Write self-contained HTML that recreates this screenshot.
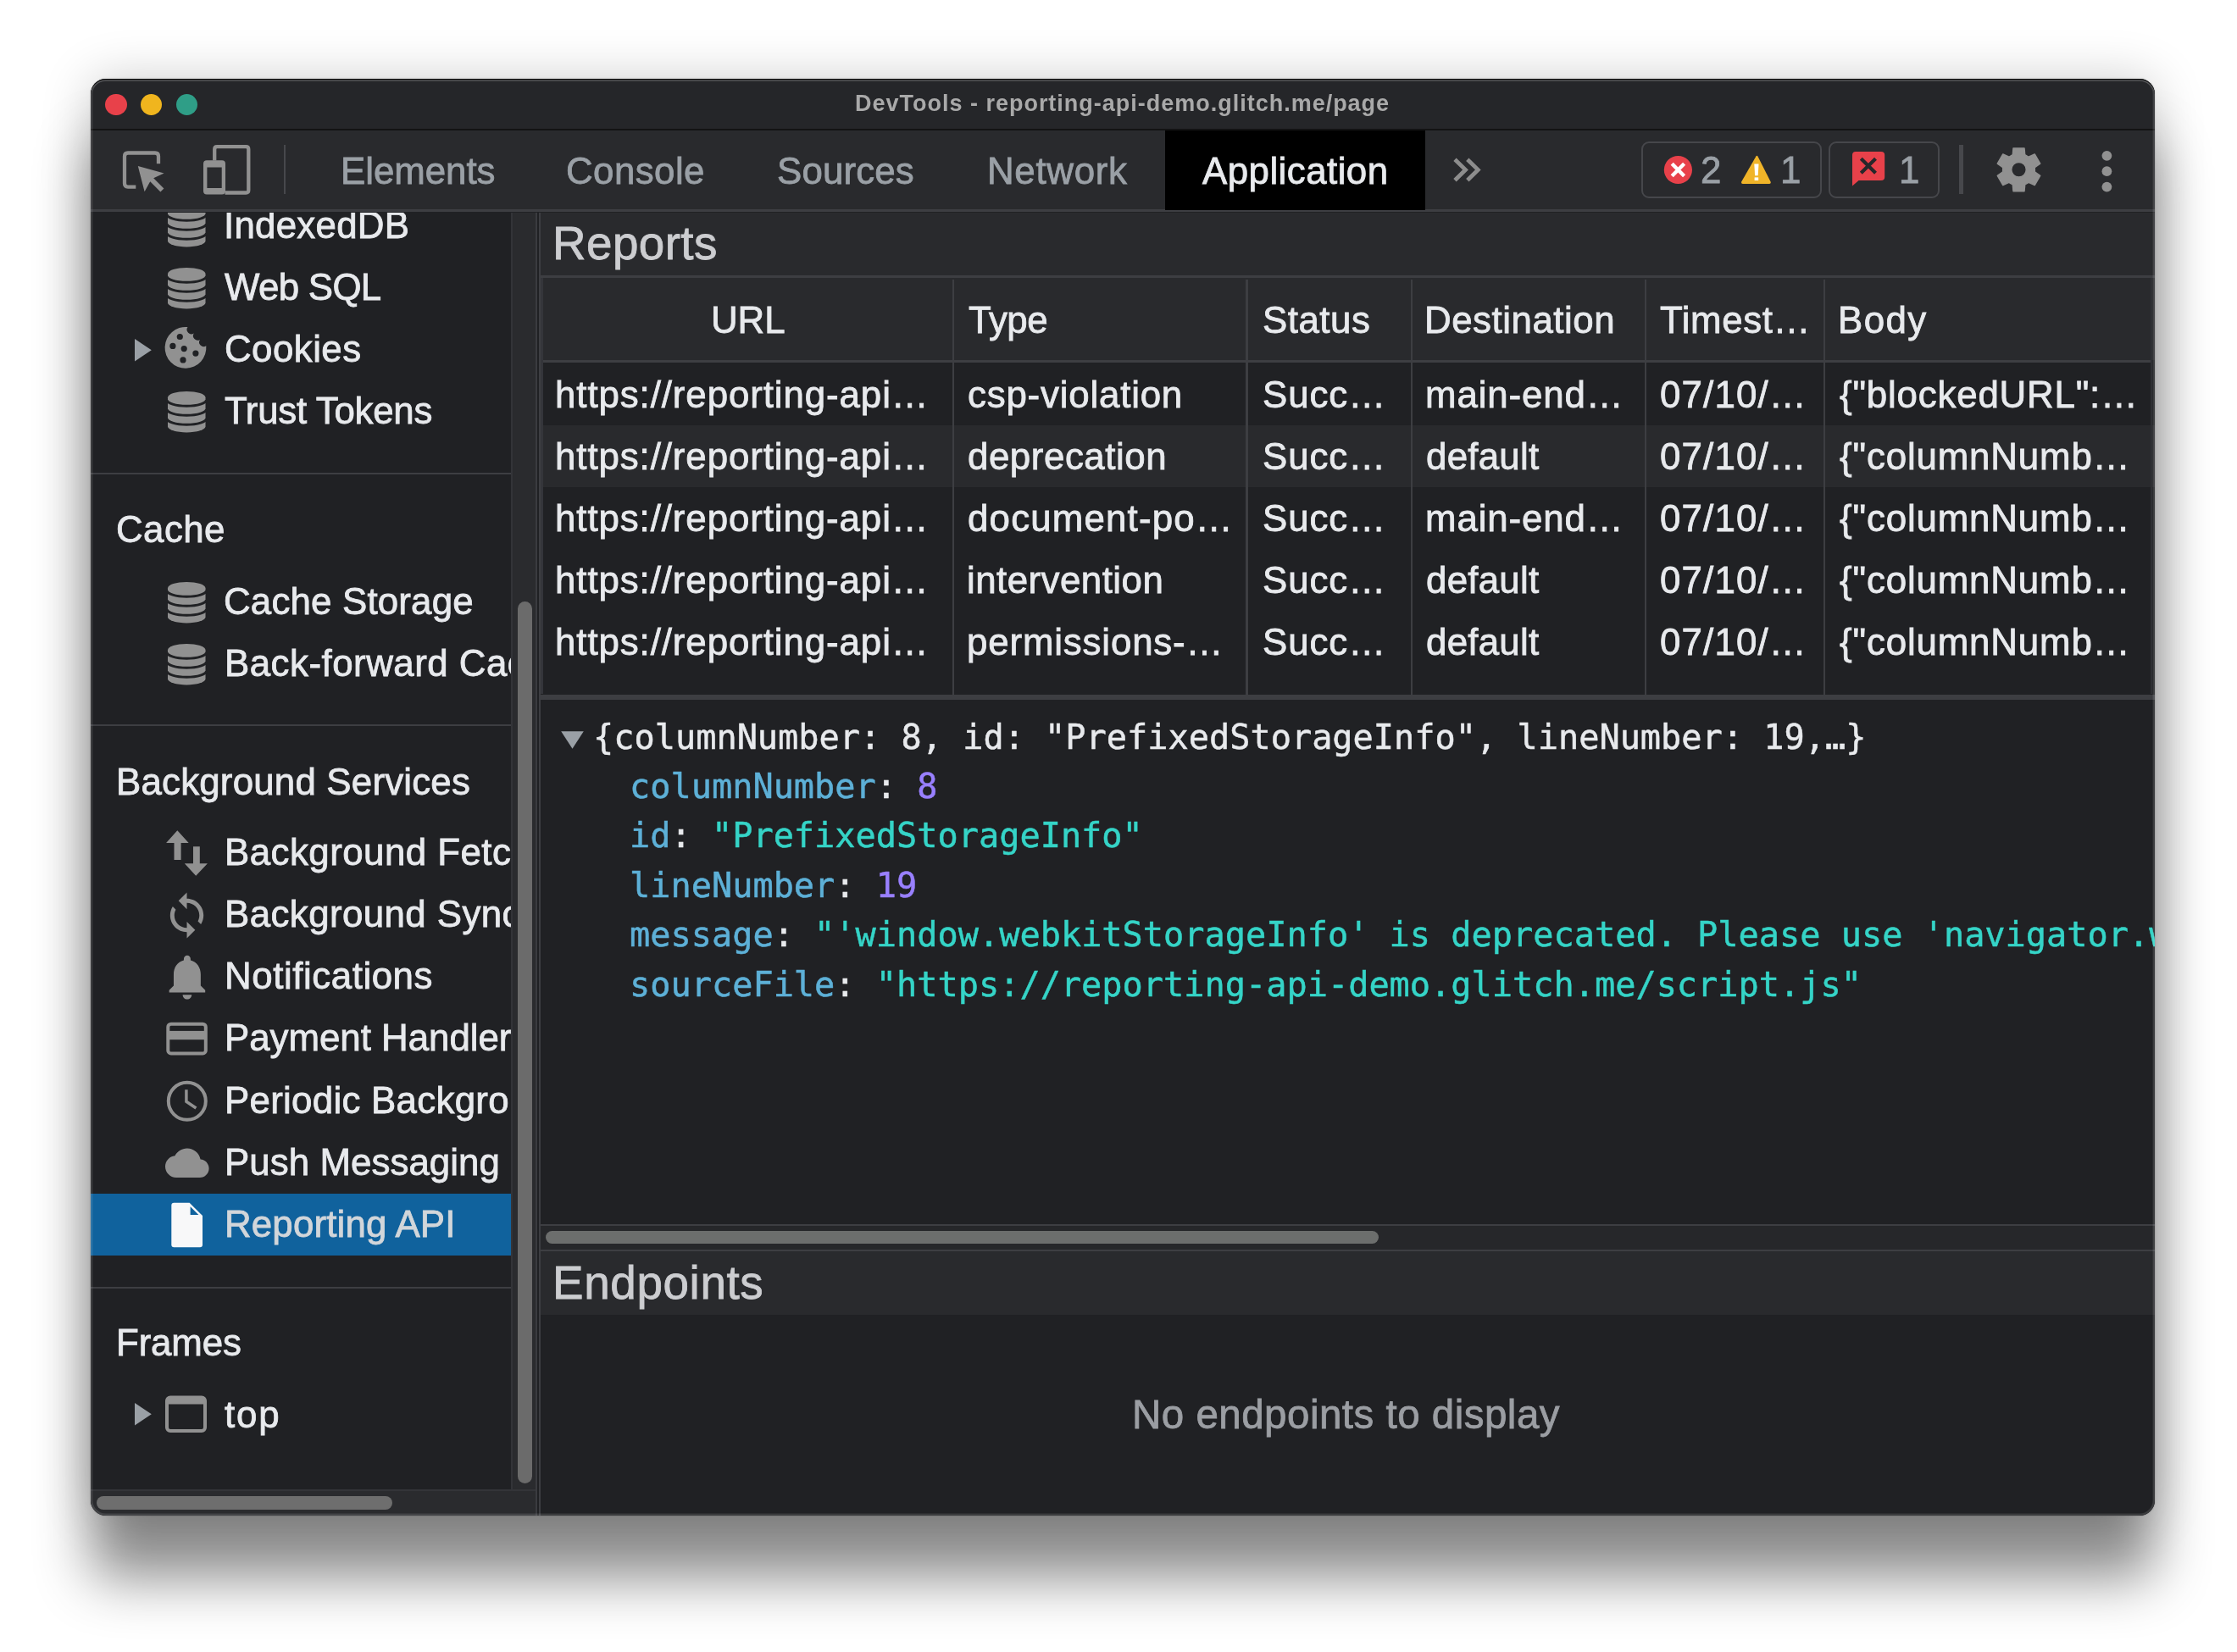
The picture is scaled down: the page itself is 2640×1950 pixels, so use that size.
<!DOCTYPE html>
<html lang="en"><head><meta charset="utf-8"><title>DevTools - reporting-api-demo.glitch.me/page</title>
<style>
html,body{margin:0;padding:0;background:#fff;}
body{width:2640px;height:1950px;position:relative;overflow:hidden;font-family:"Liberation Sans", sans-serif;}
#win{position:absolute;left:107px;top:93px;width:2436px;height:1696px;background:#202124;border-radius:18px;overflow:hidden;}
#shadow{position:absolute;left:107px;top:93px;width:2436px;height:1696px;border-radius:18px;box-shadow:0 75px 65px rgba(0,0,0,.44),0 0 60px rgba(0,0,0,.2),0 0 2px rgba(0,0,0,.25);}
#rim{position:absolute;left:0;top:0;right:0;bottom:0;border-radius:18px;box-shadow:inset 0 1.2px 0 0 rgba(0,0,0,.85),inset 0 0 0 2.4px rgba(255,255,255,.12),inset 0 3px 0 0 rgba(255,255,255,.12);pointer-events:none;}
.b{position:absolute;}
.i{position:absolute;overflow:visible;}
.t{position:absolute;white-space:nowrap;line-height:1em;-webkit-text-stroke:.8px;will-change:transform;}
.j{position:absolute;white-space:pre;font-family:"DejaVu Sans Mono", "Liberation Mono", monospace;font-size:40.26px;line-height:1em;-webkit-text-stroke:.5px;will-change:transform;}
</style></head>
<body>
<div id="shadow"></div>
<div id="win">
<div class="b" style="left:0px;top:0px;width:2436px;height:61.4px;background:#252629;border-bottom:2.2px solid #131314;box-sizing:border-box;"><div class="b" style="left:17.3px;top:17.9px;width:25.4px;height:25.4px;background:#e8414a;border-radius:50%;"></div><div class="b" style="left:58.9px;top:17.9px;width:25.4px;height:25.4px;background:#f0b51e;border-radius:50%;"></div><div class="b" style="left:100.7px;top:17.9px;width:25.4px;height:25.4px;background:#2f9e87;border-radius:50%;"></div><span class="t" style="left:901.61px;top:16.04px;font-size:27px;color:#a9a9a9;letter-spacing:0.99px;font-weight:bold;-webkit-text-stroke:0px;">DevTools - reporting-api-demo.glitch.me/page</span></div>
<div class="b" style="left:0px;top:61.4px;width:2436px;height:96.1px;background:#292a2d;border-bottom:3px solid #3d3e42;box-sizing:border-box;"><div class="b" style="left:1268px;top:0px;width:307px;height:93.4px;background:#000;"></div>
<svg class="i" style="left:33px;top:15.6px;" width="60" height="62" viewBox="140 170 60 62"><path d="M187 193.2V184.5Q187 180.5 183 180.5H151Q147 180.5 147 184.5V216.6Q147 220.6 151 220.6H160.3" fill="none" stroke="#919191" stroke-width="4.3"/><path d="M162.8 196 193.6 204.6 181.2 210.3 193.4 222.4 189.4 226.4 177.2 214.2 170.6 226.2Z" fill="#919191"/></svg>
<svg class="i" style="left:129px;top:13.6px;" width="64" height="66" viewBox="236 168 64 66"><path d="M253.2 189.5V176.2Q253.2 173.2 256.2 173.2H290.3Q293.3 173.2 293.3 176.2V224.5Q293.3 227.5 290.3 227.5H265.5" fill="none" stroke="#919191" stroke-width="4.3"/><path fill-rule="evenodd" d="M244 189.3H262Q266 189.3 266 193.3V225.6Q266 229.6 262 229.6H244Q240 229.6 240 225.6V193.3Q240 189.3 244 189.3ZM244.4 197.4V222H261.7V197.4Z" fill="#919191"/></svg>
<div class="b" style="left:227.8px;top:16.6px;width:2.3px;height:58px;background:#47484c;"></div>
<svg class="i" style="left:1601px;top:25.6px;" width="48" height="42" viewBox="1708 180 48 42"><path d="M1717 188.2 1729.5 200.4 1717 212.8M1731.8 188.2 1744.3 200.4 1731.8 212.8" fill="none" stroke="#8d8d8d" stroke-width="4.8"/></svg>
<div class="b" style="left:1829.6px;top:12.6px;width:213px;height:67px;border:2.6px solid #46474b;border-radius:9px;box-sizing:border-box;"></div>
<div class="b" style="left:2051.2px;top:12.6px;width:131.2px;height:67px;border:2.6px solid #46474b;border-radius:9px;box-sizing:border-box;"></div>
<svg class="i" style="left:1853px;top:25.6px;" width="40" height="42" viewBox="1960 180 40 42"><circle cx="1980.4" cy="200.5" r="16.6" fill="#e8414a"/><path d="M1973.2 193.3 1987.6 207.7M1987.6 193.3 1973.2 207.7" stroke="#fff" stroke-width="4.4" fill="none"/></svg>
<svg class="i" style="left:1945px;top:25.6px;" width="42" height="42" viewBox="2052 180 42 42"><path d="M2072.4 184.5Q2073.4 182.9 2074.4 184.5L2089.6 214.6Q2090.3 216.9 2088 217H2056.8Q2054.5 216.9 2055.2 214.6Z" fill="#f0b429"/><path d="M2070.3 193.5H2075.5L2074.7 207.2H2071.1Z" fill="#fff"/><rect x="2070.6" y="209.4" width="4.6" height="3.6" fill="#fff"/></svg>
<svg class="i" style="left:2075px;top:20.6px;" width="48" height="49" viewBox="2182 175 48 49"><path d="M2190 179H2220Q2224.2 179 2224.2 183V209Q2224.2 213 2220 213H2193.5L2186 219.6V183Q2186 179 2190 179Z" fill="#e8414a"/><path d="M2196.3 187.2 2213.5 204.2M2213.5 187.2 2196.3 204.2" stroke="#26272a" stroke-width="4.2" fill="none"/></svg>
<div class="b" style="left:2205.2px;top:16.3px;width:4.6px;height:58.7px;background:#47484c;"></div>
<svg class="i" style="left:2245px;top:15.6px;" width="62" height="62" viewBox="2352 170 62 62"><path fill-rule="evenodd" d="M2375.3 182.7 2376.0 174.9 2389.0 174.9 2389.7 182.7 2394.1 185.3 2401.2 182.0 2407.7 193.2 2401.3 197.7 2401.3 202.9 2407.7 207.4 2401.2 218.6 2394.1 215.3 2389.7 217.9 2389.0 225.7 2376.0 225.7 2375.3 217.9 2370.9 215.3 2363.8 218.6 2357.3 207.4 2363.7 202.9 2363.7 197.7 2357.3 193.2 2363.8 182.0 2370.9 185.3ZM2373.7 200.3A8.8 8.8 0 1 0 2391.3 200.3A8.8 8.8 0 1 0 2373.7 200.3Z" fill="#919191" stroke="#919191" stroke-width="1.5" stroke-linejoin="round"/></svg>
<svg class="i" style="left:2371px;top:19.6px;" width="18" height="56" viewBox="2478 174 18 56"><circle cx="2486.4" cy="183.8" r="5.9" fill="#919191"/><circle cx="2486.4" cy="202.2" r="5.9" fill="#919191"/><circle cx="2486.4" cy="220.6" r="5.9" fill="#919191"/></svg><span class="t" style="left:294.97px;top:25.46px;font-size:43.87px;color:#9aa0a6;letter-spacing:-0.04px;">Elements</span>
<span class="t" style="left:560.74px;top:25.46px;font-size:43.87px;color:#9aa0a6;letter-spacing:0.43px;">Console</span>
<span class="t" style="left:809.53px;top:25.46px;font-size:43.87px;color:#9aa0a6;letter-spacing:0.13px;">Sources</span>
<span class="t" style="left:1058.37px;top:25.46px;font-size:43.87px;color:#9aa0a6;letter-spacing:0.69px;">Network</span>
<span class="t" style="left:1312.4px;top:25.46px;font-size:43.87px;color:#e8eaed;letter-spacing:0.45px;">Application</span>
<span class="t" style="left:1900.34px;top:24.66px;font-size:43.87px;color:#9aa0a6;">2</span>
<span class="t" style="left:1994.36px;top:24.66px;font-size:43.87px;color:#9aa0a6;">1</span>
<span class="t" style="left:2134.06px;top:24.66px;font-size:43.87px;color:#9aa0a6;">1</span></div>
<div class="b" style="left:0px;top:157.5px;width:495.7px;height:1507px;background:#202124;overflow:hidden;"><svg class="i" style="left:89.1px;top:-9.3px;" width="48.5" height="54" viewBox="196.1 241.2 48.5 54"><path d="M198.1 250.39999999999998A22.25 7.2 0 0 1 242.6 250.39999999999998V284.4A22.25 7.2 0 0 1 198.1 284.4Z" fill="#919191"/><path d="M197.1 253.2A23.25 7.2 0 0 0 243.6 253.2" fill="none" stroke="#202124" stroke-width="3"/><path d="M197.1 264.2A23.25 7.2 0 0 0 243.6 264.2" fill="none" stroke="#202124" stroke-width="3"/><path d="M197.1 275.2A23.25 7.2 0 0 0 243.6 275.2" fill="none" stroke="#202124" stroke-width="3"/></svg>
<svg class="i" style="left:89.1px;top:63.7px;" width="48.5" height="54" viewBox="196.1 314.2 48.5 54"><path d="M198.1 323.4A22.25 7.2 0 0 1 242.6 323.4V357.4A22.25 7.2 0 0 1 198.1 357.4Z" fill="#919191"/><path d="M197.1 326.2A23.25 7.2 0 0 0 243.6 326.2" fill="none" stroke="#202124" stroke-width="3"/><path d="M197.1 337.2A23.25 7.2 0 0 0 243.6 337.2" fill="none" stroke="#202124" stroke-width="3"/><path d="M197.1 348.2A23.25 7.2 0 0 0 243.6 348.2" fill="none" stroke="#202124" stroke-width="3"/></svg>
<svg class="i" style="left:89.1px;top:209.9px;" width="48.5" height="54" viewBox="196.1 460.4 48.5 54"><path d="M198.1 469.59999999999997A22.25 7.2 0 0 1 242.6 469.59999999999997V503.59999999999997A22.25 7.2 0 0 1 198.1 503.59999999999997Z" fill="#919191"/><path d="M197.1 472.4A23.25 7.2 0 0 0 243.6 472.4" fill="none" stroke="#202124" stroke-width="3"/><path d="M197.1 483.4A23.25 7.2 0 0 0 243.6 483.4" fill="none" stroke="#202124" stroke-width="3"/><path d="M197.1 494.4A23.25 7.2 0 0 0 243.6 494.4" fill="none" stroke="#202124" stroke-width="3"/></svg>
<svg class="i" style="left:89.1px;top:434.5px;" width="48.5" height="54" viewBox="196.1 685 48.5 54"><path d="M198.1 694.2A22.25 7.2 0 0 1 242.6 694.2V728.1999999999999A22.25 7.2 0 0 1 198.1 728.1999999999999Z" fill="#919191"/><path d="M197.1 697.0A23.25 7.2 0 0 0 243.6 697.0" fill="none" stroke="#202124" stroke-width="3"/><path d="M197.1 708.0A23.25 7.2 0 0 0 243.6 708.0" fill="none" stroke="#202124" stroke-width="3"/><path d="M197.1 719.0A23.25 7.2 0 0 0 243.6 719.0" fill="none" stroke="#202124" stroke-width="3"/></svg>
<svg class="i" style="left:89.1px;top:507.6px;" width="48.5" height="54" viewBox="196.1 758.1 48.5 54"><path d="M198.1 767.3000000000001A22.25 7.2 0 0 1 242.6 767.3000000000001V801.3A22.25 7.2 0 0 1 198.1 801.3Z" fill="#919191"/><path d="M197.1 770.1A23.25 7.2 0 0 0 243.6 770.1" fill="none" stroke="#202124" stroke-width="3"/><path d="M197.1 781.1A23.25 7.2 0 0 0 243.6 781.1" fill="none" stroke="#202124" stroke-width="3"/><path d="M197.1 792.1A23.25 7.2 0 0 0 243.6 792.1" fill="none" stroke="#202124" stroke-width="3"/></svg>
<svg class="i" style="left:50.8px;top:148.1px;" width="21.8" height="28.6" viewBox="157.8 398.6 21.8 28.6"><path d="M158.8 399.6L178.6 412.9L158.8 426.2Z" fill="#9aa0a6"/></svg>
<svg class="i" style="left:50.8px;top:1404.3px;" width="21.8" height="28.6" viewBox="157.8 1654.8 21.8 28.6"><path d="M158.8 1655.8L178.6 1669.1L158.8 1682.4Z" fill="#9aa0a6"/></svg>
<svg class="i" style="left:85px;top:132.5px;" width="54" height="55" viewBox="192 383 54 55"><path d="M221.5 386.1A24.4 24.4 0 1 0 243.3 408.3A5.3 5.3 0 0 1 236 400.9A5.3 5.3 0 0 1 228.8 393.5A5.3 5.3 0 0 1 221.5 386.1Z" fill="#919191"/><circle cx="212.3" cy="397.5" r="3.6" fill="#202124"/><circle cx="203.9" cy="408.4" r="3.6" fill="#202124"/><circle cx="217.2" cy="411.6" r="3.6" fill="#202124"/><circle cx="230.9" cy="417.1" r="3.6" fill="#202124"/><circle cx="216" cy="424.9" r="3.6" fill="#202124"/></svg>
<div class="b" style="left:0px;top:307.1px;width:495.7px;height:2.4px;background:#3d3e42;"></div>
<div class="b" style="left:0px;top:604.3px;width:495.7px;height:2.4px;background:#3d3e42;"></div>
<div class="b" style="left:0px;top:1268.5px;width:495.7px;height:2.4px;background:#3d3e42;"></div>
<svg class="i" style="left:87px;top:727.5px;" width="53" height="58" viewBox="194 978 53 58"><path d="M209.3 980.3 222.7 995H213.6V1015H205.5V995H196.1ZM231.2 1033.8 244.9 1019.2H235.8V999.2H228V1019.2H217.8Z" fill="#919191"/></svg>
<svg class="i" style="left:83.78px;top:800.18px" width="59.04" height="59.04" viewBox="0 0 24 24"><path d="M12 4V1L8 5l4 4V6c3.31 0 6 2.69 6 6 0 1.01-.25 1.97-.7 2.8l1.46 1.46C19.54 15.03 20 13.57 20 12c0-4.42-3.58-8-8-8zm0 14c-3.31 0-6-2.69-6-6 0-1.01.25-1.97.7-2.8L5.24 7.74C4.46 8.97 4 10.43 4 12c0 4.42 3.58 8 8 8v3l4-4-4-4v3z" fill="#919191"/></svg>
<svg class="i" style="left:81.58px;top:870.37px" width="63.84" height="63.84" viewBox="0 0 24 24"><path d="M12 22c1.1 0 2-.9 2-2h-4c0 1.1.89 2 2 2zm6-6v-5c0-3.07-1.64-5.64-4.5-6.32V4c0-.83-.67-1.5-1.5-1.5s-1.5.67-1.5 1.5v.68C7.63 5.36 6 7.92 6 11v5l-2 2v1h16v-1l-2-2z" fill="#919191"/></svg>
<svg class="i" style="left:87px;top:953.5px;" width="53" height="44" viewBox="194 1204 53 44"><rect x="198.3" y="1208.7" width="44.5" height="34.7" rx="3.5" fill="none" stroke="#919191" stroke-width="4"/><rect x="198" y="1216.9" width="45" height="10.3" fill="#919191"/></svg>
<svg class="i" style="left:87px;top:1022.5px;" width="53" height="54" viewBox="194 1273 53 54"><circle cx="220.8" cy="1299.8" r="22" fill="none" stroke="#919191" stroke-width="4"/><path d="M219.9 1286.2V1300.2L231.4 1308" fill="none" stroke="#919191" stroke-width="3.5"/></svg>
<svg class="i" style="left:87.6px;top:1096.35px" width="51.6" height="51.6" viewBox="0 0 24 24"><path d="M19.35 10.04C18.67 6.59 15.64 4 12 4 9.11 4 6.6 5.64 5.35 8.04 2.34 8.36 0 10.91 0 14c0 3.31 2.69 6 6 6h13c2.76 0 5-2.24 5-5 0-2.64-2.05-4.78-4.65-4.96z" fill="#919191"/></svg>
<div class="b" style="left:0px;top:1158px;width:495.7px;height:73px;background:#10629d;"></div>
<svg class="i" style="left:93px;top:1166.5px;" width="42" height="58" viewBox="200 1417 42 58"><path d="M205.3 1419.7H223.6L239 1435.1V1469.3Q239 1472.3 236 1472.3H205.3Q202.3 1472.3 202.3 1469.3V1422.7Q202.3 1419.7 205.3 1419.7Z" fill="#f8f8f9"/><path d="M224.6 1424.2V1434H234.4Z" fill="#10629d"/></svg>
<svg class="i" style="left:86px;top:1394.5px;" width="54" height="49" viewBox="193 1645 54 49"><rect x="197" y="1649.5" width="45" height="39.5" rx="4" fill="none" stroke="#919191" stroke-width="4"/><rect x="197" y="1649.5" width="45" height="8" fill="#919191"/></svg><span class="t" style="left:157.17px;top:-6.04px;font-size:43.87px;color:#e8eaed;letter-spacing:0.24px;">IndexedDB</span>
<span class="t" style="left:158.4px;top:66.96px;font-size:43.87px;color:#e8eaed;letter-spacing:-0.68px;">Web SQL</span>
<span class="t" style="left:157.54px;top:139.96px;font-size:43.87px;color:#e8eaed;letter-spacing:0.44px;">Cookies</span>
<span class="t" style="left:157.71px;top:212.96px;font-size:43.87px;color:#e8eaed;letter-spacing:-0.3px;">Trust Tokens</span>
<span class="t" style="left:30.34px;top:352.16px;font-size:43.87px;color:#e8eaed;letter-spacing:0.43px;">Cache</span>
<span class="t" style="left:157.14px;top:437.96px;font-size:43.87px;color:#e8eaed;letter-spacing:0.17px;">Cache Storage</span>
<span class="t" style="left:157.87px;top:510.96px;font-size:43.87px;color:#e8eaed;letter-spacing:0.48px;">Back-forward Cache</span>
<span class="t" style="left:29.77px;top:650.46px;font-size:43.87px;color:#e8eaed;letter-spacing:0.19px;">Background Services</span>
<span class="t" style="left:157.57px;top:733.66px;font-size:43.87px;color:#e8eaed;letter-spacing:0.45px;">Background Fetch</span>
<span class="t" style="left:157.57px;top:806.76px;font-size:43.87px;color:#e8eaed;letter-spacing:0.41px;">Background Sync</span>
<span class="t" style="left:157.57px;top:879.86px;font-size:43.87px;color:#e8eaed;letter-spacing:0.55px;">Notifications</span>
<span class="t" style="left:157.57px;top:952.96px;font-size:43.87px;color:#e8eaed;letter-spacing:-0.03px;">Payment Handler</span>
<span class="t" style="left:157.57px;top:1026.76px;font-size:43.87px;color:#e8eaed;letter-spacing:0.27px;">Periodic Background Sync</span>
<span class="t" style="left:157.57px;top:1099.96px;font-size:43.87px;color:#e8eaed;letter-spacing:0.05px;">Push Messaging</span>
<span class="t" style="left:157.57px;top:1172.96px;font-size:43.87px;color:#d2d6da;letter-spacing:0.15px;">Reporting API</span>
<span class="t" style="left:29.77px;top:1312.96px;font-size:43.87px;color:#e8eaed;letter-spacing:-0.14px;">Frames</span>
<span class="t" style="left:158.4px;top:1397.96px;font-size:43.87px;color:#e8eaed;letter-spacing:1.8px;">top</span></div>
<div class="b" style="left:495.7px;top:157.5px;width:2.3px;height:1507px;background:#333438;"></div>
<div class="b" style="left:498px;top:157.5px;width:26.8px;height:1507px;background:#2a2b2e;"></div>
<div class="b" style="left:524.8px;top:157.5px;width:2.2px;height:1538.5px;background:#3a3b3f;"></div>
<div class="b" style="left:527px;top:157.5px;width:2px;height:1538.5px;background:#202124;"></div>
<div class="b" style="left:529px;top:157.5px;width:2.4px;height:1538.5px;background:#3d3e42;"></div>
<div class="b" style="left:504px;top:617px;width:17.4px;height:1040.8px;background:#6b6b6b;border-radius:9px;"></div>
<div class="b" style="left:0px;top:1664.5px;width:524.8px;height:31.5px;background:#2a2b2e;border-top:2px solid #333438;box-sizing:border-box;"></div>
<div class="b" style="left:7px;top:1672.5px;width:348.7px;height:16.7px;background:#6e6e6e;border-radius:9px;"></div>
<div class="b" style="left:531.4px;top:157.5px;width:1904.6px;height:1538.5px;background:#202124;overflow:hidden;"><div class="b" style="left:0px;top:0px;width:1904.6px;height:74.1px;background:#292a2d;"></div>
<div class="b" style="left:0px;top:74.1px;width:1904.6px;height:3.6px;background:#3d3e42;"></div>
<div class="b" style="left:0px;top:77.7px;width:1904.6px;height:97.2px;background:#292a2d;"></div>
<div class="b" style="left:0px;top:174.9px;width:1899.6px;height:2.9px;background:#3d3e42;"></div>
<div class="b" style="left:0px;top:177.8px;width:1904.6px;height:391.2px;background:#202124;"></div>
<div class="b" style="left:0px;top:251px;width:1904.6px;height:73.1px;background:#292a2d;"></div>
<div class="b" style="left:0px;top:77.7px;width:2.2px;height:491.3px;background:#34353a;"></div>
<div class="b" style="left:1899.4px;top:77.7px;width:2.4px;height:491.3px;background:#2f3034;"></div>
<div class="b" style="left:485.4px;top:79.5px;width:2.4px;height:489.5px;background:#3d3e42;"></div>
<div class="b" style="left:832.1px;top:79.5px;width:2.4px;height:489.5px;background:#3d3e42;"></div>
<div class="b" style="left:1026.7px;top:79.5px;width:2.4px;height:489.5px;background:#3d3e42;"></div>
<div class="b" style="left:1302.7px;top:79.5px;width:2.4px;height:489.5px;background:#3d3e42;"></div>
<div class="b" style="left:1513.2px;top:79.5px;width:2.4px;height:489.5px;background:#3d3e42;"></div>
<div class="b" style="left:0px;top:569px;width:1904.6px;height:6px;background:#3d3e42;"></div>
<svg class="i" style="left:21.6px;top:610.5px;" width="31" height="25" viewBox="660 861 31 25"><path d="M662.2 863.2H688.8L675.5 883.8Z" fill="#9aa0a6"/></svg>
<div class="j" style="left:61.7px;top:599.15px"><span style="color:#e8eaed">{columnNumber: 8, id: "PrefixedStorageInfo", lineNumber: 19,…}</span></div>
<div class="j" style="left:105.1px;top:657.55px"><span style="color:#5db0d7">columnNumber</span><span style="color:#e8eaed">: </span><span style="color:#9980ff">8</span></div>
<div class="j" style="left:105.1px;top:715.95px"><span style="color:#5db0d7">id</span><span style="color:#e8eaed">: </span><span style="color:#35d4c7">"PrefixedStorageInfo"</span></div>
<div class="j" style="left:105.1px;top:774.35px"><span style="color:#5db0d7">lineNumber</span><span style="color:#e8eaed">: </span><span style="color:#9980ff">19</span></div>
<div class="j" style="left:105.1px;top:832.75px"><span style="color:#5db0d7">message</span><span style="color:#e8eaed">: </span><span style="color:#35d4c7">"'window.webkitStorageInfo' is deprecated. Please use 'navigator.webkitTemporaryStorage' or 'navigator.webkitPersistentStorage' instead."</span></div>
<div class="j" style="left:105.1px;top:891.15px"><span style="color:#5db0d7">sourceFile</span><span style="color:#e8eaed">: </span><span style="color:#35d4c7">"https://reporting-api-demo.glitch.me/script.js"</span></div>
<div class="b" style="left:0px;top:1194px;width:1904.6px;height:32px;background:#26272a;border-top:2px solid #3d3e42;border-bottom:2.5px solid #3d3e42;box-sizing:border-box;"></div>
<div class="b" style="left:5.9px;top:1202.3px;width:982.7px;height:15.2px;background:#6c6e6d;border-radius:9px;"></div>
<div class="b" style="left:0px;top:1226px;width:1904.6px;height:75.1px;background:#292a2d;"></div><span class="t" style="left:13.12px;top:9.57px;font-size:54.84px;color:#cccdd0;letter-spacing:0.4px;">Reports</span>
<span class="t" style="left:13.12px;top:1236.47px;font-size:54.84px;color:#cccdd0;letter-spacing:0.61px;">Endpoints</span>
<span class="t" style="left:697.99px;top:1395.38px;font-size:47.5px;color:#9b9ea3;letter-spacing:0.49px;">No endpoints to display</span>
<span class="t" style="left:200.76px;top:105.66px;font-size:43.87px;color:#e8eaed;letter-spacing:-0.11px;">URL</span>
<span class="t" style="left:504.51px;top:105.66px;font-size:43.87px;color:#e8eaed;letter-spacing:-0.48px;">Type</span>
<span class="t" style="left:851.63px;top:105.66px;font-size:43.87px;color:#e8eaed;letter-spacing:0.51px;">Status</span>
<span class="t" style="left:1043.07px;top:105.66px;font-size:43.87px;color:#e8eaed;letter-spacing:0.51px;">Destination</span>
<span class="t" style="left:1320.81px;top:105.66px;font-size:43.87px;color:#e8eaed;letter-spacing:0.59px;">Timest…</span>
<span class="t" style="left:1530.77px;top:105.66px;font-size:43.87px;color:#e8eaed;letter-spacing:1.44px;">Body</span>
<span class="t" style="left:16.86px;top:193.06px;font-size:43.87px;color:#e8eaed;letter-spacing:0.9px;">https://reporting-api…</span>
<span class="t" style="left:503.83px;top:193.06px;font-size:43.87px;color:#e8eaed;letter-spacing:0.79px;">csp-violation</span>
<span class="t" style="left:851.63px;top:193.06px;font-size:43.87px;color:#e8eaed;letter-spacing:0.91px;">Succ…</span>
<span class="t" style="left:1043.26px;top:193.06px;font-size:43.87px;color:#e8eaed;letter-spacing:0.86px;">main-end…</span>
<span class="t" style="left:1320.63px;top:193.06px;font-size:43.87px;color:#e8eaed;letter-spacing:1.14px;">07/10/…</span>
<span class="t" style="left:1532.71px;top:193.06px;font-size:43.87px;color:#e8eaed;letter-spacing:0.8px;">{"blockedURL":…</span>
<span class="t" style="left:16.86px;top:266.16px;font-size:43.87px;color:#e8eaed;letter-spacing:0.9px;">https://reporting-api…</span>
<span class="t" style="left:503.83px;top:266.16px;font-size:43.87px;color:#e8eaed;letter-spacing:0.54px;">deprecation</span>
<span class="t" style="left:851.63px;top:266.16px;font-size:43.87px;color:#e8eaed;letter-spacing:0.91px;">Succ…</span>
<span class="t" style="left:1044.63px;top:266.16px;font-size:43.87px;color:#e8eaed;letter-spacing:0.25px;">default</span>
<span class="t" style="left:1320.63px;top:266.16px;font-size:43.87px;color:#e8eaed;letter-spacing:1.14px;">07/10/…</span>
<span class="t" style="left:1532.71px;top:266.16px;font-size:43.87px;color:#e8eaed;letter-spacing:0.84px;">{"columnNumb…</span>
<span class="t" style="left:16.86px;top:339.26px;font-size:43.87px;color:#e8eaed;letter-spacing:0.9px;">https://reporting-api…</span>
<span class="t" style="left:503.83px;top:339.26px;font-size:43.87px;color:#e8eaed;letter-spacing:1.17px;">document-po…</span>
<span class="t" style="left:851.63px;top:339.26px;font-size:43.87px;color:#e8eaed;letter-spacing:0.91px;">Succ…</span>
<span class="t" style="left:1043.26px;top:339.26px;font-size:43.87px;color:#e8eaed;letter-spacing:0.86px;">main-end…</span>
<span class="t" style="left:1320.63px;top:339.26px;font-size:43.87px;color:#e8eaed;letter-spacing:1.14px;">07/10/…</span>
<span class="t" style="left:1532.71px;top:339.26px;font-size:43.87px;color:#e8eaed;letter-spacing:0.84px;">{"columnNumb…</span>
<span class="t" style="left:16.86px;top:412.36px;font-size:43.87px;color:#e8eaed;letter-spacing:0.9px;">https://reporting-api…</span>
<span class="t" style="left:502.46px;top:412.36px;font-size:43.87px;color:#e8eaed;letter-spacing:0.46px;">intervention</span>
<span class="t" style="left:851.63px;top:412.36px;font-size:43.87px;color:#e8eaed;letter-spacing:0.91px;">Succ…</span>
<span class="t" style="left:1044.63px;top:412.36px;font-size:43.87px;color:#e8eaed;letter-spacing:0.25px;">default</span>
<span class="t" style="left:1320.63px;top:412.36px;font-size:43.87px;color:#e8eaed;letter-spacing:1.14px;">07/10/…</span>
<span class="t" style="left:1532.71px;top:412.36px;font-size:43.87px;color:#e8eaed;letter-spacing:0.84px;">{"columnNumb…</span>
<span class="t" style="left:16.86px;top:485.46px;font-size:43.87px;color:#e8eaed;letter-spacing:0.9px;">https://reporting-api…</span>
<span class="t" style="left:502.46px;top:485.46px;font-size:43.87px;color:#e8eaed;letter-spacing:0.83px;">permissions-…</span>
<span class="t" style="left:851.63px;top:485.46px;font-size:43.87px;color:#e8eaed;letter-spacing:0.91px;">Succ…</span>
<span class="t" style="left:1044.63px;top:485.46px;font-size:43.87px;color:#e8eaed;letter-spacing:0.25px;">default</span>
<span class="t" style="left:1320.63px;top:485.46px;font-size:43.87px;color:#e8eaed;letter-spacing:1.14px;">07/10/…</span>
<span class="t" style="left:1532.71px;top:485.46px;font-size:43.87px;color:#e8eaed;letter-spacing:0.84px;">{"columnNumb…</span></div>
<div id="rim"></div>
</div>
</body></html>
